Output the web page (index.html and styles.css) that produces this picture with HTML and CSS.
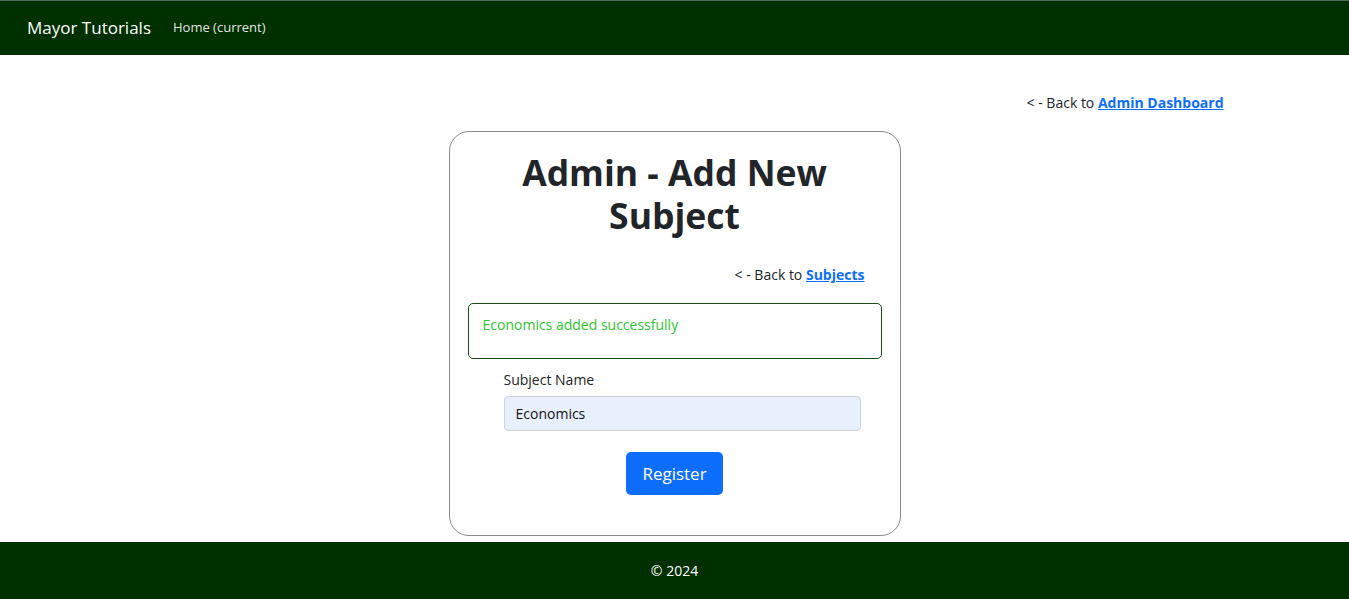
FILE: index.html
```html
<!DOCTYPE html>
<html lang="en">
<head>
<meta charset="utf-8">
<title>Admin - Add New Subject</title>
<link rel="stylesheet" href="styles.css">
</head>
<body>
<nav class="topbar">
  <a class="brand" href="#">Mayor Tutorials</a>
  <a class="nav-link" href="#">Home (current)</a>
</nav>
<main class="page">
  <div class="back-row">
    <span class="back">&lt; - Back to <a href="#">Admin Dashboard</a></span>
  </div>
  <section class="card">
    <h1 class="title">Admin - Add New Subject</h1>
    <div class="card-back">
      <span class="back">&lt; - Back to <a href="#">Subjects</a></span>
    </div>
    <div class="alert">Economics added successfully</div>
    <form class="form">
      <div class="field">
        <label class="label" for="subject">Subject Name</label>
        <input class="input" id="subject" type="text" value="Economics">
      </div>
      <div class="actions">
        <button class="btn" type="button">Register</button>
      </div>
    </form>
  </section>
</main>
<footer class="footer">© 2024</footer>
</body>
</html>
```

FILE: styles.css
```css
* { box-sizing: border-box; }

html, body { margin: 0; padding: 0; }

body {
  font-family: "Open Sans", "Noto Sans", sans-serif;
  font-size: 14px;
  line-height: 1.5;
  color: #212529;
  background: #fff;
}

.topbar {
  height: 55px;
  background: #002f00;
  border-top: 1px solid #4d6e5d;
  display: flex;
  align-items: center;
  padding-left: 27px;
  gap: 22px;
}

.brand {
  color: #fff;
  font-size: 17px;
  text-decoration: none;
}

.nav-link {
  color: rgba(255,255,255,0.9);
  font-size: 13px;
  text-decoration: none;
}

.page {
  padding-top: 37px;
}

.back-row {
  max-width: 1140px;
  margin: 0 auto;
  padding-right: 21px;
  text-align: right;
}

.back {
  color: #212529;
}

.back a {
  color: #0d6efd;
  font-weight: 700;
  text-decoration: underline;
}

.card {
  width: 452px;
  margin: 18px auto 6px;
  border: 1px solid #8a8a8a;
  border-radius: 20px;
  padding: 19px 18px 40px;
}

.title {
  margin: 0;
  text-align: center;
  font-size: 35.5px;
  font-weight: 700;
  line-height: 1.2;
  padding: 0 40px;
}

.card-back {
  text-align: right;
  padding-right: 17px;
  margin-top: 28px;
}

.alert {
  margin-top: 18px;
  border: 1px solid #1b4d1b;
  border-radius: 5px;
  padding: 10px 14px 23px;
  color: #2fc42f;
}

.form {
  margin-top: 10px;
}

.field {
  padding: 0 21px 0 36px;
}

.label {
  display: block;
  margin-bottom: 6px;
}

.input {
  display: block;
  width: 100%;
  height: 35px;
  padding: 6px 11px;
  font: inherit;
  color: #111;
  background: #e8f0fe;
  border: 1px solid #ced4da;
  border-radius: 4px;
}

.actions {
  display: flex;
  justify-content: center;
  margin-top: 21px;
}

.btn {
  font: inherit;
  font-size: 17px;
  color: #fff;
  background: #0d6efd;
  border: 0;
  border-radius: 5px;
  padding: 8px 16px;
  line-height: 27px;
}

.footer {
  height: 57px;
  background: #002f00;
  color: #fff;
  display: flex;
  align-items: center;
  justify-content: center;
}
```
